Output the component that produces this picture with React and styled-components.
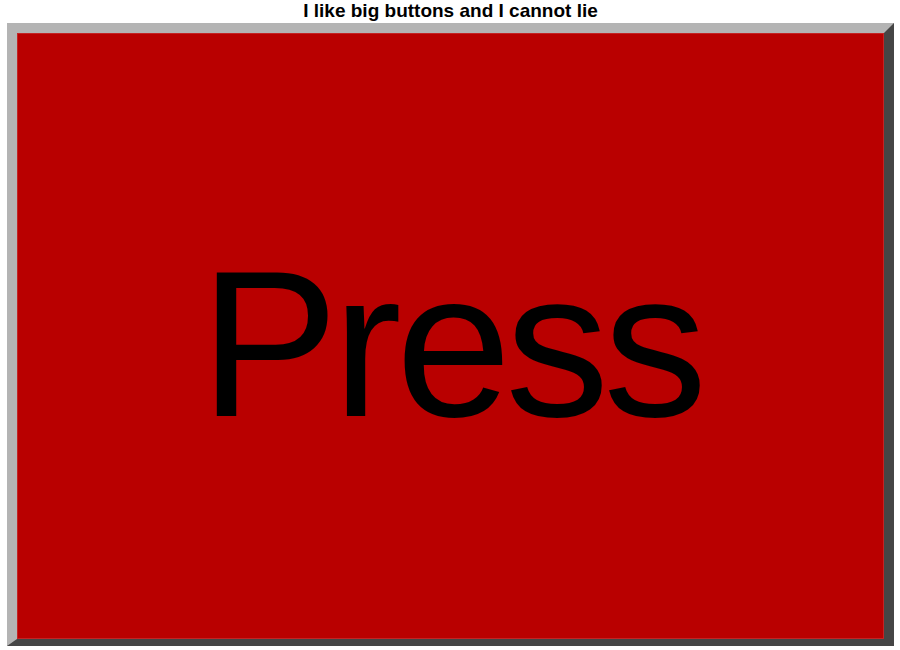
import React from 'react'
import styled, { createGlobalStyle } from 'styled-components'

const GlobalStyle = createGlobalStyle`
    html, body {
        margin: 0;
        padding: 0;
        background: #ffffff;
    }
    body {
        font-family: 'Liberation Sans', Arial, sans-serif;
    }
`;

const Page = styled.div`
    width: 900px;
    height: 650px;
    padding: 0 6px 0 7px;
    box-sizing: border-box;
    display: flex;
    flex-direction: column;
    overflow: hidden;
`;

const Title = styled.h1`
    margin: 0;
    height: 23px;
    font-size: 19px;
    line-height: 21px;
    font-weight: bold;
    text-align: center;
    color: #000000;
`;

const BigButton = styled.button`
    width: 887px;
    height: 623px;
    box-sizing: border-box;
    padding: 0;
    margin: 0;
    background: #b90000;
    border-style: solid;
    border-width: 10px 10px 7px 10px;
    border-color: #b4b4b4 #454545 #454545 #b4b4b4;
    box-shadow: inset 0 0 0 1px #c42424;
    display: flex;
    align-items: center;
    justify-content: center;
    cursor: pointer;
`;

const Label = styled.span`
    font-family: 'Liberation Sans', Arial, sans-serif;
    font-size: 208px;
    line-height: 1;
    letter-spacing: -6px;
    color: #000000;
    margin-top: 16px;
    margin-left: 0;
`;

const App = () => (
    <>
        <GlobalStyle />
        <Page>
            <Title>I like big buttons and I cannot lie</Title>
            <BigButton>
                <Label>Press</Label>
            </BigButton>
        </Page>
    </>
)

export default App
